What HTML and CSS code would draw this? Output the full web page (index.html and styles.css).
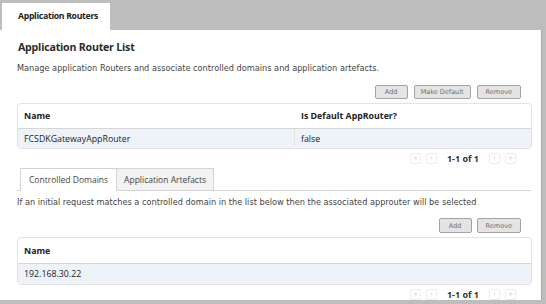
FILE: index.html
```html
<!DOCTYPE html>
<html lang="en">
<head>
  <meta charset="UTF-8" />
  <title>Application Routers</title>
  <link rel="stylesheet" href="styles.css">
</head>
<body>

  <!-- Top tab bar -->
  <div class="tabbar">
    <div class="tab-main">Application Routers</div>
  </div>

  <div class="panel">
    <div class="titulo">Application Router List</div>
    <p class="desc">Manage application Routers and associate controlled domains and application artefacts.</p>

    <div class="actions">
      <button class="btn">Add</button>
      <button class="btn btn-wide">Make Default</button>
      <button class="btn">Remove</button>
    </div>

    <table class="grid">
      <thead>
        <tr><th class="col-name">Name</th><th>Is Default AppRouter?</th></tr>
      </thead>
      <tbody>
        <tr><td class="col-name">FCSDKGatewayAppRouter</td><td>false</td></tr>
      </tbody>
    </table>

    <div class="pager">
      <span class="pg">&laquo;</span>
      <span class="pg">&lsaquo;</span>
      <span class="pg-text">1-1 of 1</span>
      <span class="pg">&rsaquo;</span>
      <span class="pg">&raquo;</span>
    </div>

    <!-- Sub tabs -->
    <div class="subtabs">
      <div class="subtab active">Controlled Domains</div>
      <div class="subtab">Application Artefacts</div>
    </div>

    <p class="desc hint">If an initial request matches a controlled domain in the list below then the associated approuter will be selected</p>

    <div class="actions second">
      <button class="btn">Add</button>
      <button class="btn">Remove</button>
    </div>

    <table class="grid grid-b">
      <thead>
        <tr><th>Name</th></tr>
      </thead>
      <tbody>
        <tr><td>192.168.30.22</td></tr>
      </tbody>
    </table>

    <div class="pager">
      <span class="pg">&laquo;</span>
      <span class="pg">&lsaquo;</span>
      <span class="pg-text">1-1 of 1</span>
      <span class="pg">&rsaquo;</span>
      <span class="pg">&raquo;</span>
    </div>
  </div>

</body>
</html>
```

FILE: styles.css
```css
body {
  margin: 0;
  background: #bdbdbd;
  font-family: "Open Sans", sans-serif;
  color: #333;
  width: 546px;
  height: 304px;
  overflow: hidden;
}

.tabbar {
  height: 30px;
  padding-left: 2px;
  display: flex;
  align-items: flex-end;
}

.tab-main {
  background: #fff;
  width: 108px;
  height: 27px;
  box-sizing: border-box;
  padding-left: 16px;
  font-size: 8.7px;
  font-weight: bold;
  letter-spacing: -0.3px;
  line-height: 27px;
  color: #222;
}

.panel {
  background: #fff;
  width: 542px;
  height: 270px;
  box-sizing: border-box;
  padding: 8px 10px 0 17px;
  border-right: 1px solid #a8a8a8;
  overflow: hidden;
}

.titulo {
  font-size: 10.6px;
  font-weight: bold;
  letter-spacing: -0.2px;
  color: #2b2b2b;
  padding-left: 1px;
  line-height: 18px;
}

.desc {
  margin: 6px 0 0;
  font-family: "DejaVu Sans", sans-serif;
  font-size: 8.2px;
  color: #444;
  line-height: 12px;
}

.actions {
  display: flex;
  justify-content: flex-end;
  gap: 6px;
  margin-top: 11px;
  padding-right: 10px;
  width: 504px;
}

.actions.second {
  margin-top: 10px;
  gap: 5px;
}

.btn {
  font-family: "DejaVu Sans", sans-serif;
  font-size: 6.5px;
  color: #6f6f6f;
  background: #e4e4e4;
  border: 1px solid #a3a3a3;
  border-radius: 2px;
  height: 14px;
  padding: 0 8px;
  min-width: 33px;
}

.btn-wide {
  padding: 0 6px;
}

.actions.second .btn {
  height: 15px;
}

.grid {
  width: 515px;
  margin-top: 4px;
  border: 1px solid #e2e2e2;
  border-radius: 4px;
  border-spacing: 0;
  font-size: 8.8px;
  color: #222;
}

.grid th {
  text-align: left;
  font-weight: bold;
  height: 24px;
  padding: 0 6px;
  border-bottom: 1px solid #d6d6d6;
}

.grid td {
  height: 19px;
  padding: 0 6px;
  background: #eef3f9;
  border-radius: 0 0 3px 3px;
}

.grid td.col-name {
  width: 264px;
  border-right: 1px solid #e2e2e2;
}

.grid-b th {
  height: 25px;
}

.grid-b td {
  height: 20px;
}

.pager {
  display: flex;
  justify-content: flex-end;
  align-items: center;
  gap: 5px;
  height: 18px;
  padding-right: 15px;
  width: 499px;
}

.pg {
  width: 9px;
  height: 9px;
  border: 1px solid #ececec;
  border-radius: 2px;
  font-size: 7px;
  line-height: 8px;
  text-align: center;
  color: #c8c8c8;
}

.pg-text {
  font-size: 9px;
  font-weight: bold;
  color: #333;
  margin: 0 5px;
}

.subtabs {
  display: flex;
  margin-top: 1px;
  padding-left: 3px;
  border-bottom: 1px solid #d4d4d4;
  width: 511px;
}

.subtab {
  height: 21px;
  line-height: 21px;
  padding: 0 7px;
  font-size: 8.5px;
  color: #444;
  background: #f2f2f2;
  border: 1px solid #d4d4d4;
  border-bottom: none;
}

.subtab.active {
  background: #fff;
  height: 22px;
  margin-bottom: -1px;
  padding: 0 8px;
  border-right: none;
}

.hint {
  margin-top: 5px;
}
```
